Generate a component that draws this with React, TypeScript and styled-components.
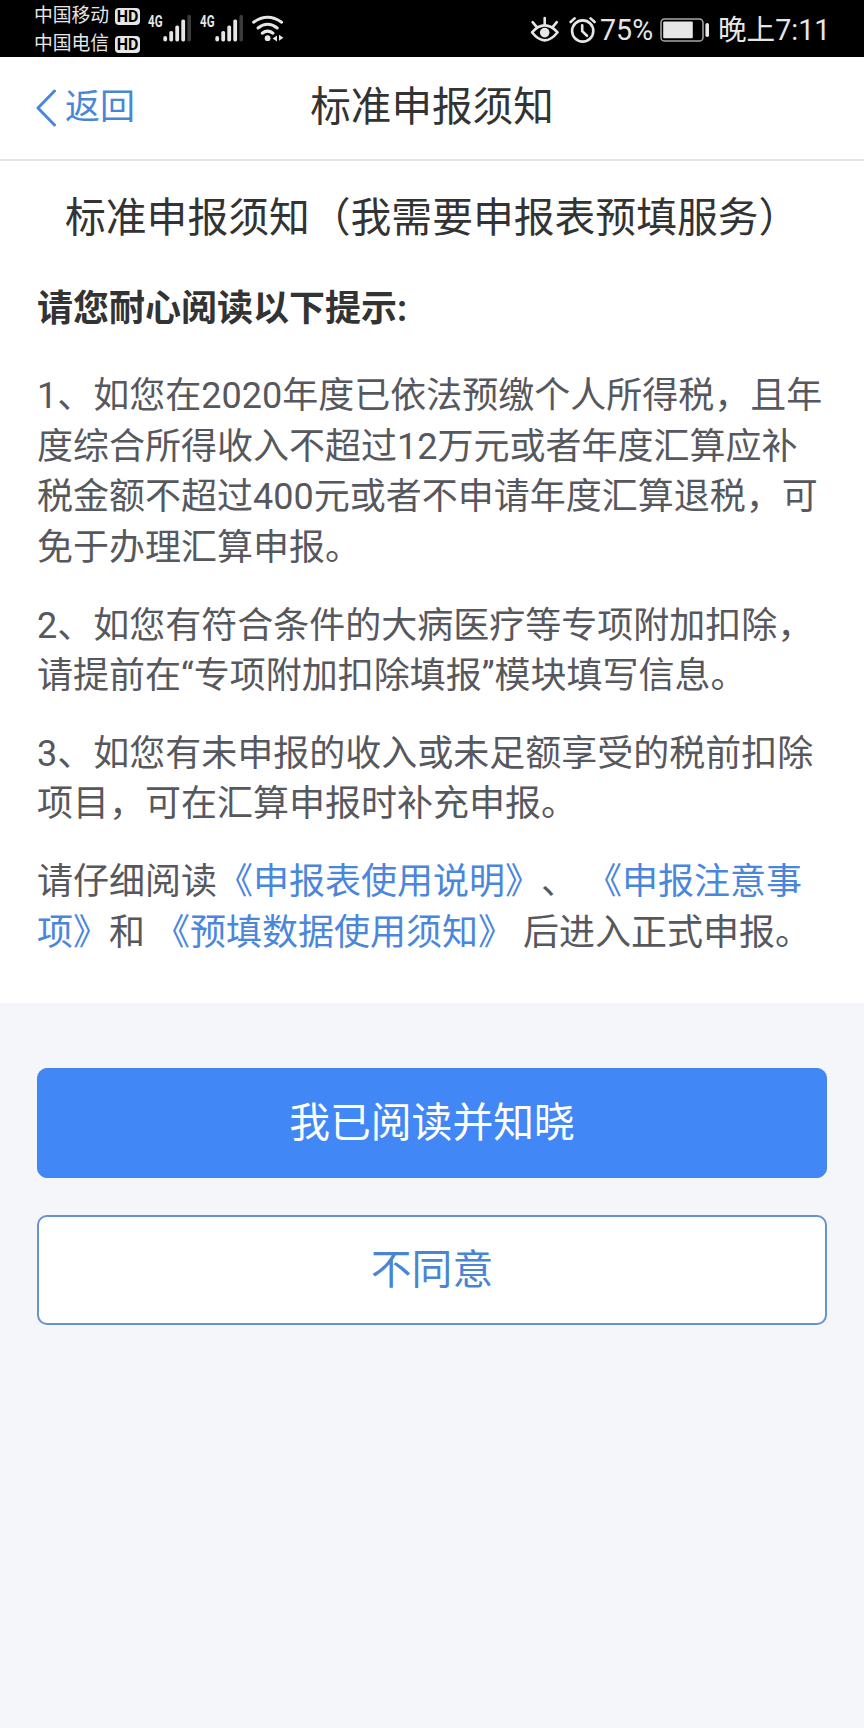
import React from "react";
import styled, { createGlobalStyle, css } from "styled-components";

const GlobalStyle = createGlobalStyle`
  * { box-sizing: border-box; }
  body {
    margin: 0;
    background: #f4f7fa;
    font-family: Roboto, "Noto Sans CJK SC", sans-serif;
    text-spacing-trim: space-all;
  }
`;

const Screen = styled.div`
  width: 864px;
  height: 1728px;
  overflow: hidden;
  background: #f4f6fa;
`;

const StatusBar = styled.div`
  height: 57px;
  background: #000;
  color: #e6e6e6;
  display: flex;
  justify-content: space-between;
  padding: 0 37px 0 34px;
`;

const StatusLeft = styled.div`
  display: flex;
`;

const Carriers = styled.div`
  display: flex;
  flex-direction: column;
  padding-top: 2px;
  width: 114px;
`;

const Carrier = styled.div`
  display: flex;
  align-items: center;
  gap: 6px;
  height: 28px;
  font-size: 18.8px;
  line-height: 28px;
  white-space: nowrap;
`;

const HdBadge = styled.span`
  width: 25px;
  height: 17px;
  border-radius: 4px;
  background: #e6e6e6;
  color: #000;
  font-size: 16px;
  font-weight: 700;
  line-height: 18px;
  text-align: center;
`;

const Signal = styled.div`
  display: flex;
  width: 52px;
  padding-top: 15px;
`;

const Network = styled.span`
  width: 15px;
  font-size: 16.5px;
  font-weight: 700;
  line-height: 14px;
  transform: scaleX(0.7);
  transform-origin: left top;
`;

const StatusRight = styled.div`
  display: flex;
  align-items: center;
  height: 57px;
  padding-top: 3px;
`;

const StatusText = styled.span<{ $width: number }>`
  width: ${(p) => p.$width}px;
  font-size: 28.6px;
  line-height: 40px;
  white-space: nowrap;
`;

const Icon = styled.svg<{ $gap?: number }>`
  display: block;
  flex: none;
  margin-right: ${(p) => p.$gap ?? 0}px;
`;

const NavBar = styled.header`
  height: 104px;
  background: #fff;
  border-bottom: 2px solid #e4e4e4;
  display: grid;
  grid-template-columns: 200px 1fr 200px;
  align-items: center;
  padding-bottom: 3px;
`;

const Back = styled.a`
  display: flex;
  align-items: center;
  gap: 8px;
  padding: 2px 0 0 35px;
  color: #4a86d8;
  font-size: 35px;
  line-height: 50px;
`;

const NavTitle = styled.h1`
  margin: 0;
  text-align: center;
  color: #333;
  font-size: 40.6px;
  font-weight: 400;
  line-height: 58px;
`;

const Notice = styled.main`
  height: 842px;
  background: #fff;
  padding: 27px 37px 0;
`;

const NoticeTitle = styled.h2`
  margin: 0 0 36px;
  padding-left: 28px;
  color: #333;
  font-size: 40.8px;
  font-weight: 400;
  line-height: 60px;
  white-space: nowrap;
`;

const Lead = styled.p`
  margin: 0 0 37px;
  color: #333;
  font-size: 36px;
  font-weight: 700;
  line-height: 50.4px;
`;

const Paragraph = styled.p`
  margin: 0 0 27.6px;
  color: #57585e;
  font-size: 36px;
  line-height: 50.4px;
`;

const DocLink = styled.a`
  color: #4a86dc;
`;

const Actions = styled.div`
  display: flex;
  flex-direction: column;
  gap: 37px;
  padding: 65px 37px 0;
`;

const Button = styled.button<{ $primary?: boolean }>`
  height: 110px;
  padding: 0 0 7px;
  border-radius: 10px;
  font-family: inherit;
  font-size: 40.8px;
  ${(p) =>
    p.$primary
      ? css`
          border: 1px solid #4583e4;
          background: #4187f5;
          color: #fff;
        `
      : css`
          border: 2px solid #6593cb;
          background: #fff;
          color: #4a86d0;
        `}
`;

const SignalBars = () => (
  <Icon width="30" height="28" viewBox="0 0 30 28" fill="#e6e6e6">
    <rect x="0.3" y="21" width="3.8" height="5.4" rx="1.9" />
    <rect x="6.3" y="16" width="3.8" height="10.4" rx="1.6" />
    <rect x="12.3" y="10.5" width="3.8" height="15.9" rx="1.6" />
    <rect x="18.3" y="4.5" width="3.8" height="21.9" rx="1.6" />
    <rect x="24.4" y="0" width="3.6" height="26.4" rx="1.4" fill="#3c3c3c" />
  </Icon>
);

const WifiIcon = () => (
  <Icon width="34" height="42" viewBox="1 0 34 42" fill="none" stroke="#e6e6e6" strokeWidth="3" strokeLinecap="round">
    <path d="M2.6 22.2Q16.6 12.4 30.6 22.2" />
    <path d="M7 28Q16.6 20.6 26.2 28" />
    <path d="M11.2 33.2Q16.6 29 22 33.2" />
    <circle cx="16.6" cy="38.2" r="2.9" fill="#e6e6e6" stroke="none" />
    <path d="M26 35.4v6l-4.4-3zM28 34.8v6l4.4-3z" fill="#e6e6e6" stroke="none" />
  </Icon>
);

const EyeIcon = () => (
  <Icon $gap={9} width="30" height="28" viewBox="0 0 30 28" fill="none" stroke="#e6e6e6" strokeWidth="2.6" strokeLinecap="round">
    <path d="M2 16.3Q14.6 2.5 27.6 16.3Q14.6 32.5 2 16.3Z" strokeLinejoin="round" />
    <circle cx="14.7" cy="16.6" r="4.8" fill="#e6e6e6" stroke="none" />
    <path d="M14.7 2v6M2.6 6.2l3.8 4.5M26.8 6.2l-3.8 4.5" />
  </Icon>
);

const AlarmIcon = () => (
  <Icon $gap={3} width="28" height="28" viewBox="0 0 28 28" fill="none" stroke="#e6e6e6" strokeWidth="2.6" strokeLinecap="round">
    <circle cx="13.7" cy="15" r="10.6" />
    <path d="M13.2 9.2v6l4.8 4.6" />
    <path d="M1.6 6l4-3.6M25.6 6l-4-3.6" />
  </Icon>
);

const BatteryIcon = () => (
  <Icon $gap={8} width="50" height="26" viewBox="0 0 50 26">
    <rect x="1" y="2" width="42" height="22" rx="3.6" fill="none" stroke="#a8a8a8" strokeWidth="1.5" />
    <rect x="3.2" y="4.6" width="29.6" height="16.6" rx="1" fill="#e6e6e6" />
    <rect x="45.4" y="6" width="3.6" height="14" rx="1.8" fill="#e6e6e6" />
  </Icon>
);

const BackIcon = () => (
  <Icon width="22" height="38" viewBox="0 0 22 38" fill="none" stroke="#4a86e0" strokeWidth="3" strokeLinecap="round" strokeLinejoin="round">
    <path d="M19.5 2L3 19l16.5 17" />
  </Icon>
);

export default function App() {
  return (
    <Screen>
      <GlobalStyle />
      <StatusBar>
        <StatusLeft>
          <Carriers>
            <Carrier>中国移动<HdBadge>HD</HdBadge></Carrier>
            <Carrier>中国电信<HdBadge>HD</HdBadge></Carrier>
          </Carriers>
          <Signal><Network>4G</Network><SignalBars /></Signal>
          <Signal><Network>4G</Network><SignalBars /></Signal>
          <WifiIcon />
        </StatusLeft>
        <StatusRight>
          <EyeIcon />
          <AlarmIcon />
          <StatusText $width={60}>75%</StatusText>
          <BatteryIcon />
          <StatusText $width={109}>晚上7:11</StatusText>
        </StatusRight>
      </StatusBar>
      <NavBar>
        <Back><BackIcon />返回</Back>
        <NavTitle>标准申报须知</NavTitle>
      </NavBar>
      <Notice>
        <NoticeTitle>标准申报须知（我需要申报表预填服务）</NoticeTitle>
        <Lead>请您耐心阅读以下提示:</Lead>
        <Paragraph>
          1、如您在2020年度已依法预缴个人所得税，且年度综合所得收入不超过12万元或者年度汇算应补税金额不超过400元或者不申请年度汇算退税，可免于办理汇算申报。
        </Paragraph>
        <Paragraph>
          2、如您有符合条件的大病医疗等专项附加扣除，请提前在“专项附加扣除填报”模块填写信息。
        </Paragraph>
        <Paragraph>
          3、如您有未申报的收入或未足额享受的税前扣除项目，可在汇算申报时补充申报。
        </Paragraph>
        <Paragraph>
          请仔细阅读<DocLink>《申报表使用说明》</DocLink>、 <DocLink>《申报注意事项》</DocLink>和{" "}
          <DocLink>《预填数据使用须知》</DocLink> 后进入正式申报。
        </Paragraph>
      </Notice>
      <Actions>
        <Button $primary>我已阅读并知晓</Button>
        <Button>不同意</Button>
      </Actions>
    </Screen>
  );
}
